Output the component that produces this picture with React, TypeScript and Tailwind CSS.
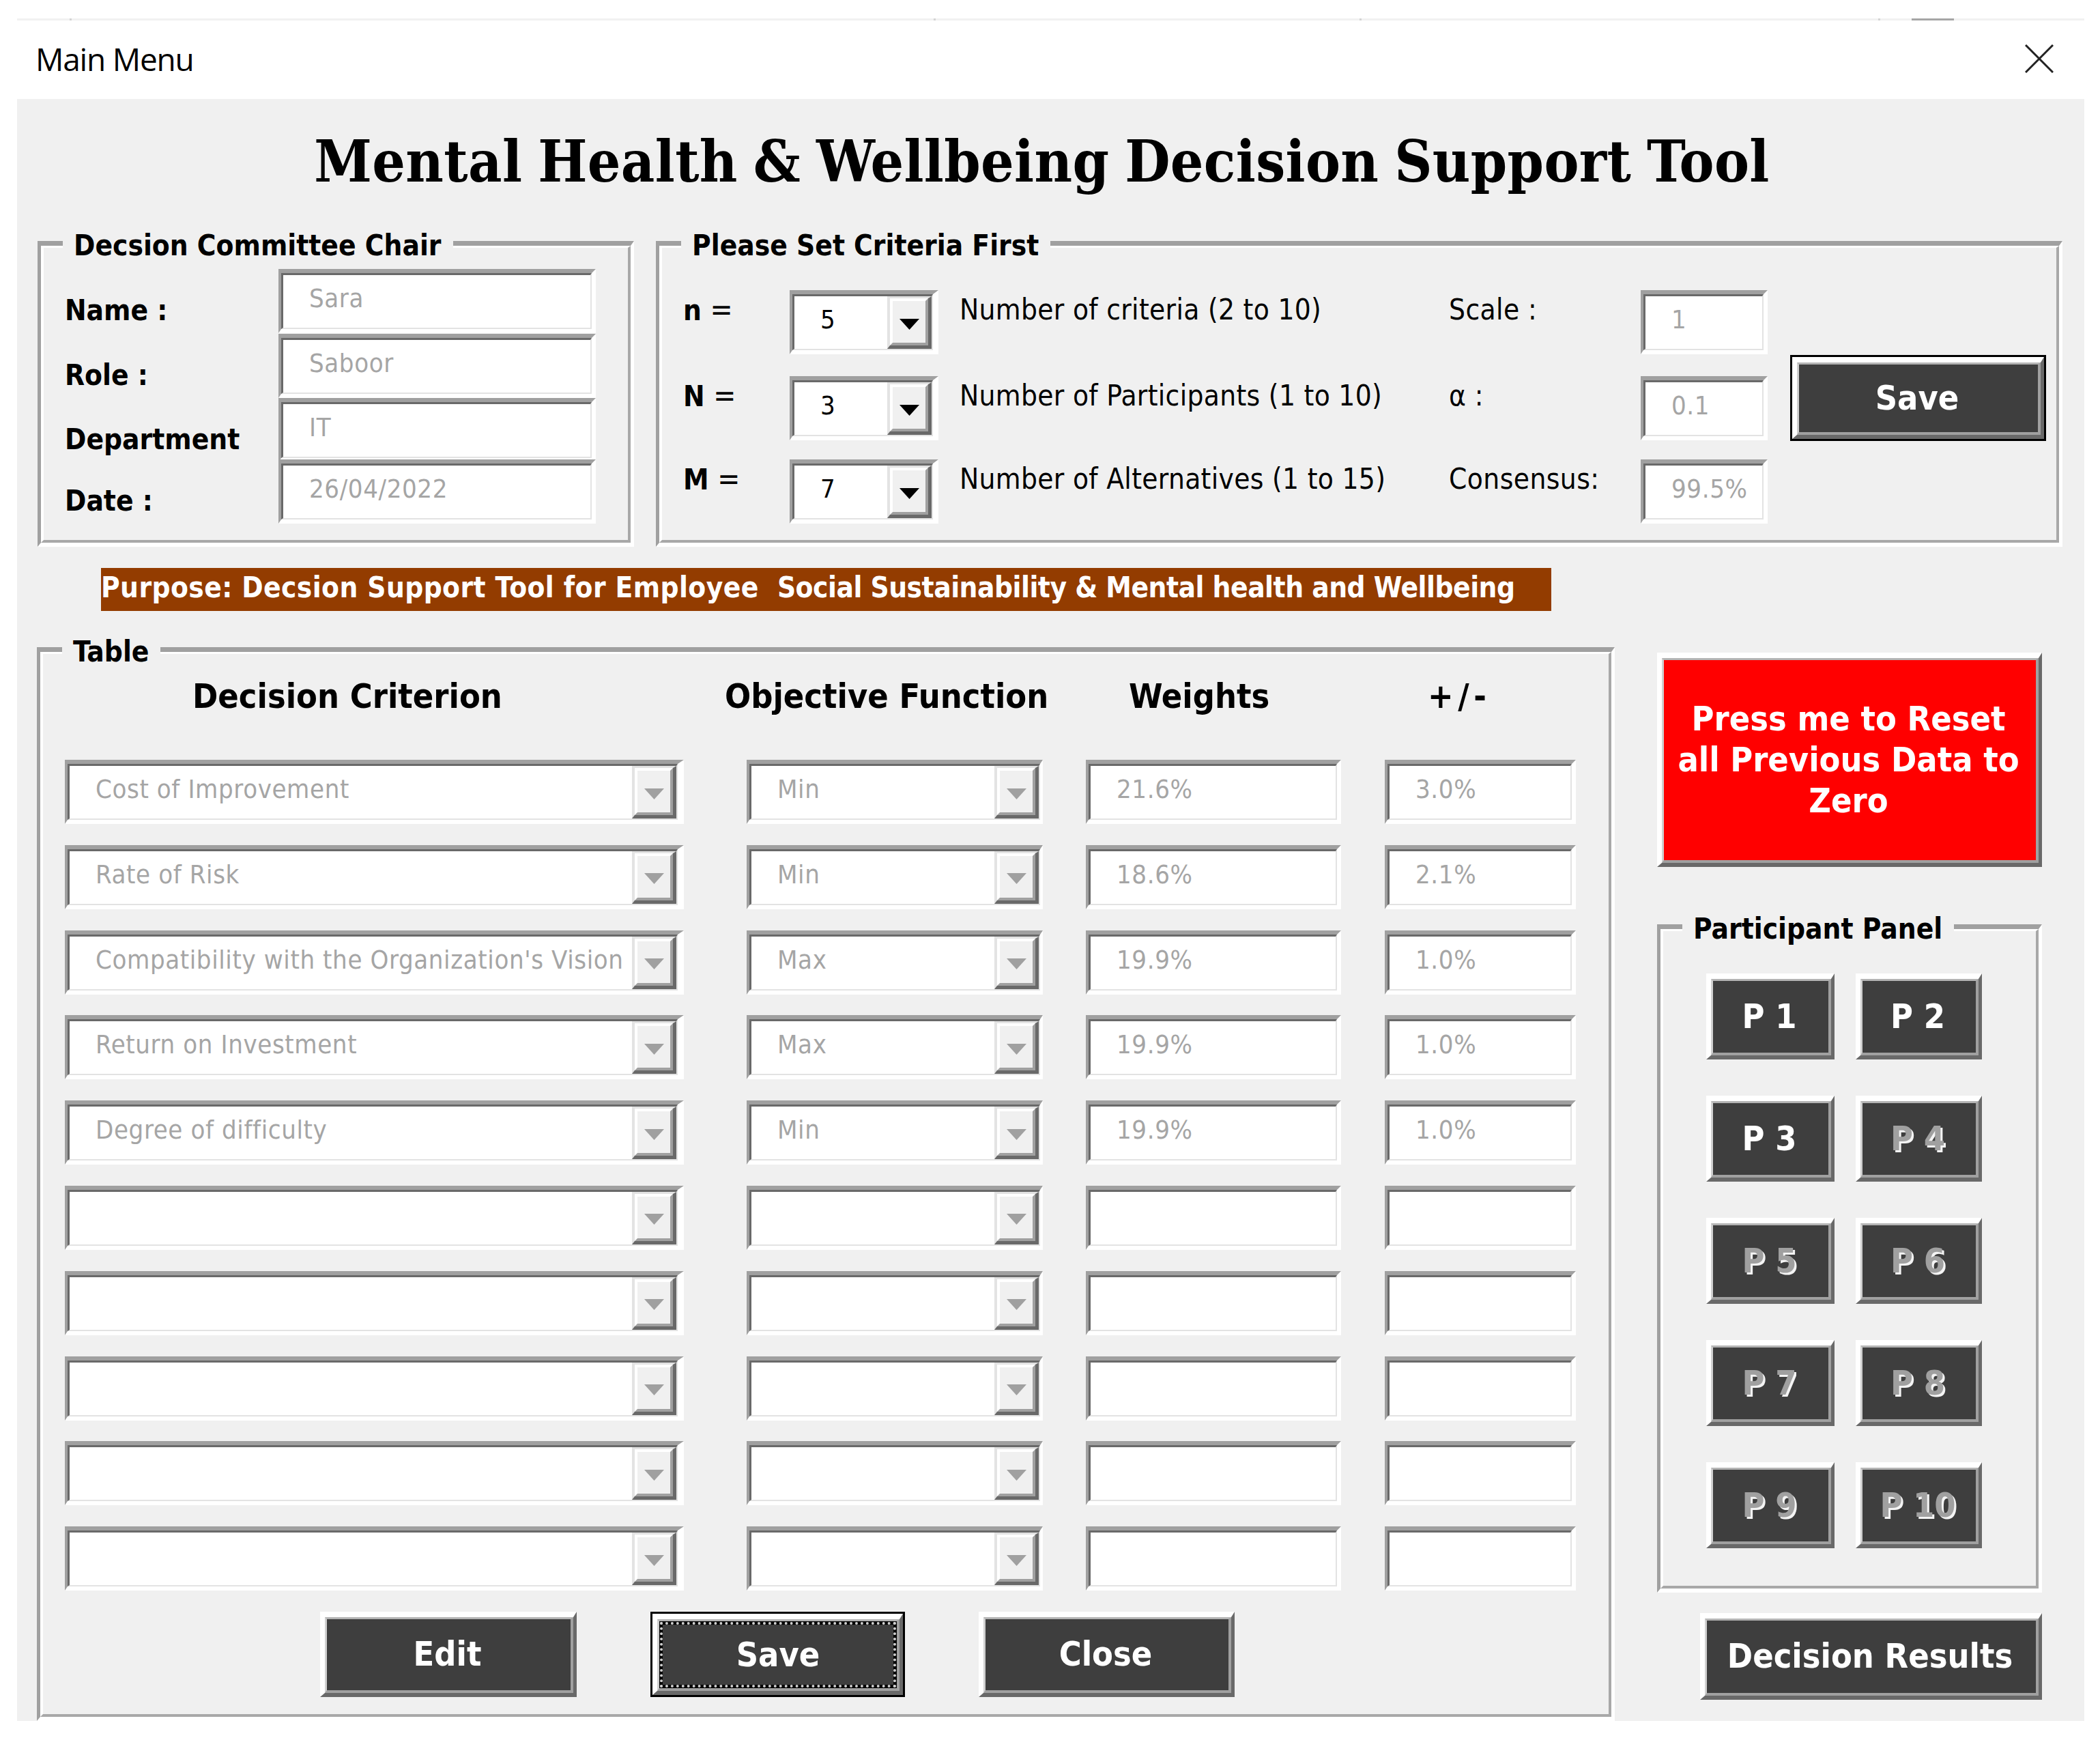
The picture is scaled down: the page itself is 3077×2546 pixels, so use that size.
import clsx from "clsx";
import type { ReactNode } from "react";

interface Criterion {
  name: string;
  objective: string;
  weight: string;
  deviation: string;
}

const criteria: Array<Criterion> = [
  { name: "Cost of Improvement", objective: "Min", weight: "21.6%", deviation: "3.0%" },
  { name: "Rate of Risk", objective: "Min", weight: "18.6%", deviation: "2.1%" },
  {
    name: "Compatibility with the Organization's Vision",
    objective: "Max",
    weight: "19.9%",
    deviation: "1.0%",
  },
  { name: "Return on Investment", objective: "Max", weight: "19.9%", deviation: "1.0%" },
  { name: "Degree of difficulty", objective: "Min", weight: "19.9%", deviation: "1.0%" },
  ...Array.from({ length: 5 }, () => ({ name: "", objective: "", weight: "", deviation: "" })),
];

const chair = [
  { label: "Name :", value: "Sara", height: "h-[95px]" },
  { label: "Role :", value: "Saboor", height: "h-[94px]" },
  { label: "Department", value: "IT", height: "h-[90px]" },
  { label: "Date :", value: "26/04/2022", height: "h-[93px]" },
];

const settings = [
  {
    symbol: "n",
    value: "5",
    text: "Number of criteria (2 to 10)",
    label: "Scale :",
    result: "1",
    height: "h-[126px]",
  },
  {
    symbol: "N",
    value: "3",
    text: "Number of Participants (1 to 10)",
    label: "α :",
    result: "0.1",
    height: "h-[122px]",
  },
  {
    symbol: "M",
    value: "7",
    text: "Number of Alternatives (1 to 15)",
    label: "Consensus:",
    result: "99.5%",
    height: "h-[93px]",
  },
];

const participants = [1, 2, 3, 4, 5, 6, 7, 8, 9, 10];
const activeParticipants = 3;

interface GroupBoxProps {
  title: string;
  className?: string;
  children: ReactNode;
}

function GroupBox({ title, className, children }: GroupBoxProps) {
  return (
    <section className={clsx("relative", className)}>
      <div className="h-full border-t-[7px] border-r-[5px] border-b-[6px] border-l-[5px] border-t-[#a0a0a0] border-r-white border-b-white border-l-[#a0a0a0]">
        <div className="h-full border-t-[3px] border-r-[4px] border-b-[4px] border-l-[4px] border-t-white border-r-[#a8a8a8] border-b-[#a8a8a8] border-l-white">
          {children}
        </div>
      </div>
      <h2 className="absolute -top-[13px] left-[37px] bg-[#f0f0f0] pr-[17px] pl-4 text-[42px] leading-[40px] font-bold whitespace-nowrap">
        {title}
      </h2>
    </section>
  );
}

interface FieldProps {
  value: string;
  className?: string;
  edge?: string;
  dropdown?: boolean;
  enabled?: boolean;
}

function Field({ value, className, edge = "border-r-[6px]", dropdown, enabled }: FieldProps) {
  return (
    <div
      className={clsx(
        "h-[94px] border-t-[6px] border-b-[6px] border-l-[4px] border-t-[#a0a0a0] border-r-white border-b-white border-l-[#a0a0a0]",
        edge,
        className,
      )}
    >
      <div className="flex h-full border-t-[3px] border-r-2 border-b-2 border-l-[3px] border-t-[#696969] border-r-[#e3e3e3] border-b-[#e3e3e3] border-l-[#696969] bg-white">
        <span
          className={clsx(
            "grow pl-[38px] text-[38px] leading-[68px] tracking-[0.6px] whitespace-nowrap",
            enabled ? "text-black" : "text-[#a5a5a5]",
          )}
        >
          {value}
        </span>
        {dropdown && <DropButton enabled={enabled} />}
      </div>
    </div>
  );
}

function DropButton({ enabled }: { enabled?: boolean }) {
  return (
    <div className="w-[65px] shrink-0 border-t-[3px] border-r-[5px] border-b-[5px] border-l-[4px] border-t-[#e3e3e3] border-r-[#696969] border-b-[#696969] border-l-[#e3e3e3]">
      <div className="flex h-full items-center justify-center border-t-[4px] border-r-[4px] border-b-[4px] border-l-[4px] border-t-white border-r-[#a0a0a0] border-b-[#a0a0a0] border-l-white bg-[#f0f0f0]">
        <svg
          className={clsx("mt-[6px] h-[16px] w-[29px]", enabled ? "fill-black" : "fill-[#a0a0a0]")}
          viewBox="0 0 29 16"
        >
          <path d="M0 0h29L14.5 16z" />
        </svg>
      </div>
    </div>
  );
}

interface ButtonProps {
  children: ReactNode;
  className?: string;
  color?: string;
  isDefault?: boolean;
  focused?: boolean;
  disabled?: boolean;
}

function Button({ children, className, color, isDefault, focused, disabled }: ButtonProps) {
  return (
    <button
      className={clsx(
        "block text-[50px] leading-[60px] font-bold",
        isDefault && "border-[3px] border-black",
        className,
      )}
    >
      <span className="block h-full border-t-[8px] border-r-[5px] border-b-[6px] border-l-[7px] border-t-white border-r-[#696969] border-b-[#696969] border-l-white">
        <span
          className={clsx(
            "flex h-full items-center justify-center border-t-[3px] border-r-[4px] border-b-[4px] border-l-[3px] border-t-[#b4b4b4] border-r-[#a0a0a0] border-b-[#a0a0a0] border-l-[#d0d0d0]",
            color ?? "bg-[#3e3e3e]",
            disabled ? "text-[#a0a0a0] [text-shadow:3px_3px_0_#f4f4f4]" : "text-white",
          )}
        >
          {focused ? (
            <span className="block size-full bg-black p-px">
              <span className="block size-full border-4 border-dotted border-[#d0d0d0]">
                <span className="flex size-full items-center justify-center bg-[#3e3e3e]">
                  {children}
                </span>
              </span>
            </span>
          ) : (
            <span className="-translate-x-[2px] -translate-y-px">{children}</span>
          )}
        </span>
      </span>
    </button>
  );
}

function TitleBar() {
  return (
    <header className="h-[118px]">
      <div className="flex h-[3px] bg-[#f1f1f1]">
        <span className="ml-[77px] w-[3px] bg-[#d4d4d4]" />
        <span className="ml-[1263px] w-[3px] bg-[#d4d4d4]" />
        <span className="ml-[621px] w-[3px] bg-[#d4d4d4]" />
        <span className="ml-[757px] w-[3px] bg-[#d4d4d4]" />
        <span className="ml-[46px] w-[62px] bg-[#a6a6a6]" />
      </div>
      <div className="flex justify-between pr-[45px] pl-[27px]">
        <span className="font-['Open_Sans','Noto_Sans',sans-serif] text-[46px] leading-[112px] tracking-[-1.2px]">
          Main Menu
        </span>
        <svg className="mt-[35px] size-[42px]" viewBox="0 0 42 42" stroke="#222" strokeWidth="3">
          <path d="M1 1l40 40M41 1L1 41" />
        </svg>
      </div>
    </header>
  );
}

export default function App() {
  return (
    <div className="h-[2546px] w-[3077px] bg-white px-[25px] pt-[27px] pr-[23px] font-['DejaVu_Sans_Condensed','DejaVu_Sans',sans-serif] text-black">
      <TitleBar />

      <main className="h-[2376px] bg-[#f0f0f0]">
        <h1 className="h-[208px] pr-[26px] text-center font-['DejaVu_Serif_Condensed','DejaVu_Serif',serif] text-[85px] leading-[183px] font-bold tracking-[0.35px] whitespace-nowrap [word-spacing:-4px]">
          Mental Health &amp; Wellbeing Decision Support Tool
        </h1>

        <div className="ml-[30px] flex gap-[32px]">
          <GroupBox title="Decsion Committee Chair" className="h-[448px] w-[874px]">
            <div className="pt-[31px] pl-[31px]">
              {chair.map((c) => (
                <div className={clsx("flex", c.height)} key={c.label}>
                  <span className="mt-[29px] w-[313px] text-[42px] leading-[63px] font-bold">
                    {c.label}
                  </span>
                  <Field value={c.value} className="w-[465px]" />
                </div>
              ))}
            </div>
          </GroupBox>

          <GroupBox title="Please Set Criteria First" className="h-[448px] w-[2061px]">
            <div className="flex pl-[31px]">
              <div className="pt-[62px]">
                {settings.map((s) => (
                  <div
                    className={clsx("flex text-[42px] leading-[58px] whitespace-nowrap", s.height)}
                    key={s.symbol}
                  >
                    <span className="w-[156px] font-bold">
                      {s.symbol}
                      <span className="text-[44px] font-normal"> =</span>
                    </span>
                    <Field
                      value={s.value}
                      className="w-[218px]"
                      edge="border-r-[8px]"
                      dropdown
                      enabled
                    />
                    <span className="ml-[31px] w-[717px] tracking-[0.3px]">{s.text}</span>
                    <span className="w-[281px] tracking-[0.4px]">{s.label}</span>
                    <Field value={s.result} className="w-[186px]" />
                  </div>
                ))}
              </div>
              <Button className="mt-[157px] ml-[33px] h-[126px] w-[375px]" isDefault>
                Save
              </Button>
            </div>
          </GroupBox>
        </div>

        <p className="mt-[31px] ml-[123px] h-[63px] w-[2125px] bg-[#933c00] text-[42px] leading-[58px] font-bold whitespace-pre text-white">
          <span className="tracking-[0.4px]">{"Purpose: Decsion Support Tool for Employee  "}</span>
          <span className="tracking-[-0.5px]">
            Social Sustainability &amp; Mental health and Wellbeing
          </span>
        </p>

        <div className="mt-[53px] ml-[29px] flex">
          <GroupBox title="Table" className="h-[1573px] w-[2312px]">
            <div className="pl-[32px]">
              <div className="grid h-[155px] grid-cols-[1000px_496px_438px_220px] text-[50px] leading-[125px] font-bold whitespace-nowrap">
                <span className="ml-[187px]">Decision Criterion</span>
                <span className="-ml-[33px]">Objective Function</span>
                <span className="ml-[63px]">Weights</span>
                <span className="ml-[63px] tracking-[6.5px]">+/-</span>
              </div>

              {criteria.map((c, index) => (
                <div
                  className="grid h-[124.8px] grid-cols-[999px_497px_438px_280px]"
                  key={`criterion_${index}`}
                >
                  <Field value={c.name} className="w-[907px]" edge="border-r-[9px]" dropdown />
                  <Field value={c.objective} className="w-[434px]" edge="border-r-[4px]" dropdown />
                  <Field value={c.weight} className="w-[374px]" />
                  <Field value={c.deviation} className="w-[280px]" />
                </div>
              ))}

              <div className="ml-[374px] flex">
                <Button className="h-[125px] w-[376px]">Edit</Button>
                <Button className="ml-[108px] h-[125px] w-[373px]" isDefault focused>
                  Save
                </Button>
                <Button className="ml-[108px] h-[125px] w-[375px]">Close</Button>
              </div>
            </div>
          </GroupBox>

          <div className="ml-[62px] flex w-[564px] flex-col pt-2">
            <Button className="h-[314px] w-[564px]" color="bg-[#ff0000]">
              Press me to Reset
              <br />
              all Previous Data to
              <br />
              Zero
            </Button>

            <GroupBox title="Participant Panel" className="mt-[84px] h-[979px]">
              <div className="grid auto-rows-[179px] grid-cols-[188px_185px] gap-x-[31px] pt-[62px] pl-[63px]">
                {participants.map((p) => (
                  <Button key={p} className="h-[126px]" disabled={p > activeParticipants}>
                    P {p}
                  </Button>
                ))}
              </div>
            </GroupBox>

            <Button className="mt-[30px] h-[127px] w-[501px] self-end whitespace-nowrap">
              Decision Results
            </Button>
          </div>
        </div>
      </main>
    </div>
  );
}
